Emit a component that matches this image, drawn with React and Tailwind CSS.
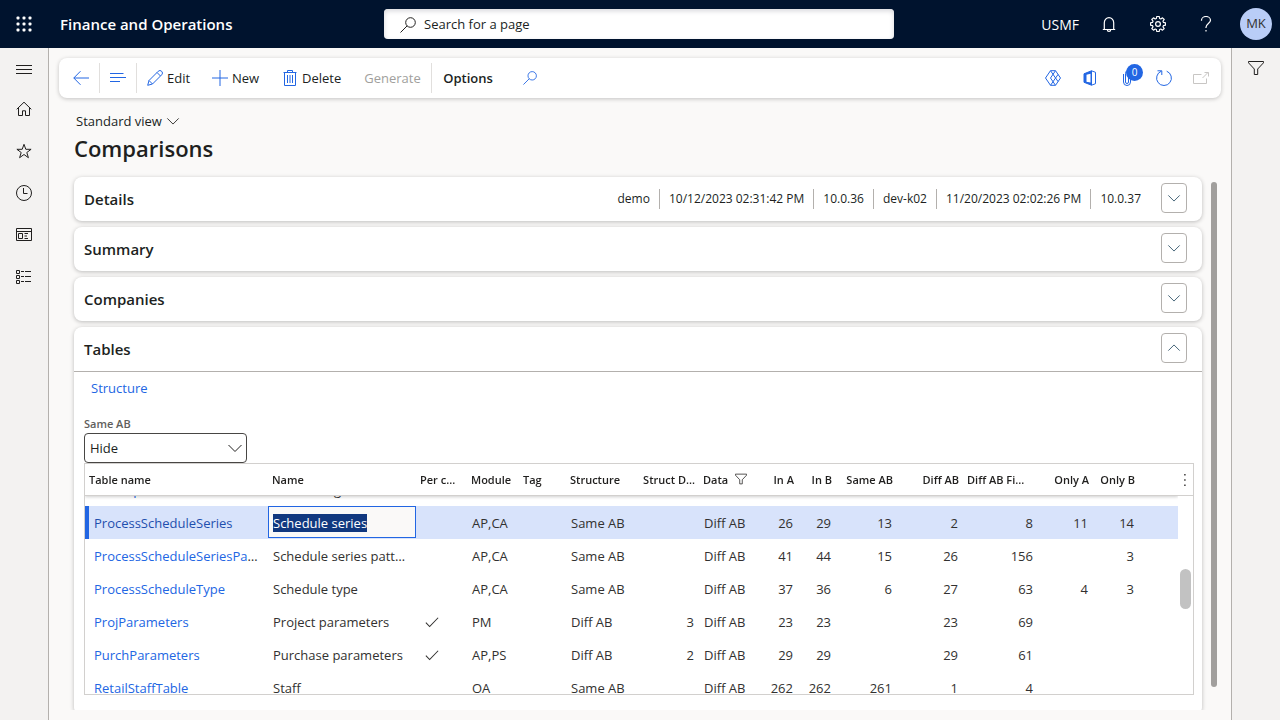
import React, { useLayoutEffect, useRef } from 'react'
import clsx from 'clsx'

const columns = [
  { key: "table", label: "Table name", width: "w-[183px]" },
  { key: "name", label: "Name", width: "w-[148px]" },
  { key: "perCompany", label: "Per c...", width: "w-[51px]" },
  { key: "module", label: "Module", width: "w-[52px]" },
  { key: "tag", label: "Tag", width: "w-[47px]" },
  { key: "structure", label: "Structure", width: "w-[70px]" },
  { key: "structDiff", label: "Struct D...", width: "w-[63px]", right: true },
  { key: "data", label: "Data", width: "w-[61px]", filtered: true },
  { key: "inA", label: "In A", width: "w-[38px]", right: true },
  { key: "inB", label: "In B", width: "w-[38px]", right: true },
  { key: "sameAB", label: "Same AB", width: "w-[61px]", right: true },
  { key: "diffAB", label: "Diff AB", width: "w-[66px]", right: true },
  { key: "diffFields", label: "Diff AB Fi...", width: "w-[75px]", right: true, leftLabel: true },
  { key: "onlyA", label: "Only A", width: "w-[55px]", right: true },
  { key: "onlyB", label: "Only B", width: "w-[46px]", right: true },
]

const rows = [
  { table: "PrintOptions", name: "Print listing" },
  { table: "ProcessScheduleSeries", name: "Schedule series", module: "AP,CA", structure: "Same AB", data: "Diff AB", inA: 26, inB: 29, sameAB: 13, diffAB: 2, diffFields: 8, onlyA: 11, onlyB: 14, selected: true },
  { table: "ProcessScheduleSeriesPattern", name: "Schedule series pattern", module: "AP,CA", structure: "Same AB", data: "Diff AB", inA: 41, inB: 44, sameAB: 15, diffAB: 26, diffFields: 156, onlyB: 3 },
  { table: "ProcessScheduleType", name: "Schedule type", module: "AP,CA", structure: "Same AB", data: "Diff AB", inA: 37, inB: 36, sameAB: 6, diffAB: 27, diffFields: 63, onlyA: 4, onlyB: 3 },
  { table: "ProjParameters", name: "Project parameters", perCompany: true, module: "PM", structure: "Diff AB", structDiff: 3, data: "Diff AB", inA: 23, inB: 23, diffAB: 23, diffFields: 69 },
  { table: "PurchParameters", name: "Purchase parameters", perCompany: true, module: "AP,PS", structure: "Diff AB", structDiff: 2, data: "Diff AB", inA: 29, inB: 29, diffAB: 29, diffFields: 61 },
  { table: "RetailStaffTable", name: "Staff", module: "OA", structure: "Same AB", data: "Diff AB", inA: 262, inB: 262, sameAB: 261, diffAB: 1, diffFields: 4 },
]

const details = ["demo", "10/12/2023 02:31:42 PM", "10.0.36", "dev-k02", "11/20/2023 02:02:26 PM", "10.0.37"]

function Icon({ children, className = "size-4" }) {
  return (
    <svg viewBox="0 0 16 16" fill="none" stroke="currentColor" strokeWidth="1" className={clsx("shrink-0", className)} aria-hidden="true">
      {children}
    </svg>
  )
}

const Waffle = () => (
  <Icon>
    {[0, 6, 12].map((y) => [0, 6, 12].map((x) => (
      <rect key={`${x}-${y}`} x={x + 0.5} y={y + 0.5} width="3" height="3" rx="1" fill="currentColor" stroke="none" />
    )))}
  </Icon>
)
const Menu = () => <Icon><path d="M0 5.5h16M0 9.5h16M0 13.5h16" /></Icon>
const Home = () => <Icon><path d="M.7 8.3 8 1.2l7.3 7.1M2.5 6.8v7.7h4V9.8h3v4.7h4V6.8" /></Icon>
const Star = () => <Icon><path d="m8 1.3 1.8 5h5.3l-4.3 3.2 1.6 5.2L8 11.5l-4.4 3.2 1.6-5.2L.9 6.3h5.3z" /></Icon>
const Clock = () => <Icon><circle cx="8" cy="8" r="7.5" /><path d="M7.5 3v5.5h4" /></Icon>
const Workspace = () => (
  <Icon><path d="M.5 1.5h15v12H.5zM.5 4.5h15M2.5 6.5h4v5h-4zM8.5 6.5H12M8.5 9H11M8.5 11.5H12" /></Icon>
)
const Modules = () => (
  <Icon><path d="M.5 1.5h3v3h-3zM.5 6.5h3v3h-3zM.5 11.5h3v3h-3zM5 2.5h3M9 2.5h6M5 7.5h3M9 7.5h6M5 12.5h3M9 12.5h6" /></Icon>
)
const Search = ({ className }) => (
  <Icon className={className}><circle cx="10.5" cy="5.5" r="4.8" /><path d="M7.1 8.9.5 15.5" /></Icon>
)
const Bell = () => (
  <Icon><path d="M1.8 13.500h12.400M3.300 13.500V6.700a4.700 5 0 0 1 9.400 0v6.800M6.300 13.700a1.700 1.700 0 0 0 3.400 0" strokeWidth="1.200" /></Icon>
)
const Gear = () => (
  <Icon>
    <circle cx="8" cy="8" r="2.4" strokeWidth="1.2" />
    <path strokeWidth="1.2" strokeLinejoin="round" d="M6.8.5h2.4l.4 2 1.2.5 1.700-1.200 1.700 1.700-1.200 1.700.5 1.200 2 .4v2.400l-2 .4-.5 1.200 1.200 1.700-1.700 1.700-1.700-1.200-1.200.5-.4 2H6.800l-.4-2-1.200-.5-1.700 1.200-1.700-1.700L3 10.800l-.5-1.200-2-.4V6.800l2-.4L3 5.200 1.800 3.500l1.700-1.700L5.200 3l1.200-.5z" />
  </Icon>
)
const Question = () => (
  <Icon><path d="M3.5 4.8V4.3a4.5 3.8 0 0 1 9 0c0 3-4.5 3.5-4.5 7V12M8 14v1.5" strokeWidth="1.2" /></Icon>
)
const Back = () => <Icon><path d="M16 8H.8M7.5 1.2.8 8l6.7 6.8" /></Icon>
const Lines = () => <Icon><path d="M0 3.5h13.5M0 7.5h16M0 11.5h10" /></Icon>
const Pencil = () => (
  <Icon><path d="M.7 15.3 2 10.5 11.2 1.3a2.2 2.2 0 0 1 3.5 3.5L5.5 14zM2 10.5 5.5 14M10 2.5 13.5 6" /></Icon>
)
const Plus = () => <Icon><path d="M8 0v16M0 8h16" /></Icon>
const Trash = () => (
  <Icon><path d="M1.5 2.5h13M5.5 2.5v-2h5v2M2.5 2.5v13h11v-13M5.5 5v8M8 5v8M10.5 5v8" /></Icon>
)
const Diamond = () => (
  <Icon>
    <path strokeLinejoin="round" d="M5.5.7h5L15.5 8l-5 7.3h-5L.5 8z" />
    <path d="M10.5.7 5.5 8l5 7.3M5.5.7 13 11.5M5.5 15.3 13 4.5" />
  </Icon>
)
const Office = () => (
  <Icon>
    <path d="M2 3.8 9.5.8v14.4L2 12.3z" fill="currentColor" />
    <path d="M4.5 4.8 8.5 3.7v9l-4-.7z" fill="white" stroke="none" />
    <path d="m9.5.8 4 1.5v11.4l-4 1.5M4 12.2l5.5 1.3" />
  </Icon>
)
const Clip = () => (
  <Icon><path d="M4.5 4v8a3.5 3.5 0 0 0 7 0V3.5a2.5 3 0 0 0-5 0V12a1.5 1.5 0 0 0 3 0V4" /></Icon>
)
const Refresh = () => <Icon><path d="M5.3 1.2a7.4 7.4 0 1 0 5.4 0M5.8 5V.8H1.5" /></Icon>
const PopOut = () => <Icon><path d="M8.5 4.5H.5v9h13V8.5M9.5 8 15 2.5M11.500 2.500h4V6.500" /></Icon>
const Funnel = ({ className }) => (
  <Icon className={className}><path d="M.5 1.5h15v1.3L9.7 9v5.5H6.3V9L.5 2.8z" /></Icon>
)
const Chevron = ({ className, up }) => (
  <Icon className={className}><path d={up ? "M1.5 11 8 4.5l6.5 6.5" : "M1.5 5 8 11.5 14.5 5"} /></Icon>
)
const Check = () => <Icon className="ml-1 size-3.5"><path d="M1 7.5 5.300 12 15 2" strokeWidth="1.200" /></Icon>

function TopBar() {
  return (
    <header className="flex h-12 shrink-0 items-center bg-[#00132e] text-white">
      <button aria-label="Apps" className="flex w-12 justify-center"><Waffle /></button>
      <span className="w-[336px] pl-3 text-[15px] leading-[22px] font-semibold">Finance and Operations</span>
      <label className="flex h-[30px] w-[510px] items-center gap-2 rounded bg-white pt-0.5 pr-4 pl-4 text-[#201f1e] shadow-[inset_0_2px_5px_#d8d8dc]">
        <Search />
        <input aria-label="Search for a page" placeholder="Search for a page" className="w-full bg-transparent text-[13px] outline-none placeholder:text-[#201f1e]" />
      </label>
      <div className="ml-auto flex items-center pr-2">
        <span className="mr-[22px] pt-0.5 text-sm">USMF</span>
        <button aria-label="Notifications" className="mr-[33px]"><Bell /></button>
        <button aria-label="Settings" className="mr-8"><Gear /></button>
        <button aria-label="Help" className="mr-[26px]"><Question /></button>
        <button className="size-8 rounded-full bg-[#b9cdf7] text-[13px] text-[#323130]">MK</button>
      </div>
    </header>
  )
}

function SideNav() {
  const items = [["Home", Home], ["Favorites", Star], ["Recent", Clock], ["Workspaces", Workspace], ["Modules", Modules]]
  return (
    <nav className="flex w-[49px] shrink-0 flex-col border-r border-[#b3b0ad] bg-[#f3f2f1] text-[#201f1e]">
      <button aria-label="Expand" className="flex h-10 items-center justify-center"><Menu /></button>
      {items.map(([label, Glyph]) => (
        <button key={label} aria-label={label} className="flex h-[42px] items-center justify-center"><Glyph /></button>
      ))}
    </nav>
  )
}

function ActionBar() {
  return (
    <div className="mx-[10px] mt-[10px] flex h-10 items-center rounded-lg bg-white pl-1 text-[13px] shadow-[0_1px_4px_#00000038]">
      <div className="flex items-center text-[#2266e3]">
        <button aria-label="Back" className="flex h-[30px] w-[37px] items-center justify-center border-r border-[#e1dfdd]"><Back /></button>
        <button aria-label="List" className="flex h-[30px] w-[37px] items-center justify-center border-r border-[#e1dfdd]"><Lines /></button>
      </div>
      <button className="flex w-[65px] items-center gap-1 pl-[10px]"><span className="text-[#2266e3]"><Pencil /></span><span className="pt-0.5">Edit</span></button>
      <button className="flex w-[70px] items-center gap-1 pl-[10px]"><span className="text-[#2266e3]"><Plus /></span><span className="pt-0.5">New</span></button>
      <button className="flex w-[82px] items-center gap-1 pl-[10px]"><span className="text-[#2266e3]"><Trash /></span><span className="pt-0.5">Delete</span></button>
      <button disabled className="h-[30px] w-[78px] border-r border-[#e1dfdd] pt-0.5 text-center text-[#a19f9d]">Generate</button>
      <button className="w-[72px] pt-0.5 text-center font-semibold">Options</button>
      <button aria-label="Find" className="pl-[19px] text-[#2266e3]"><Search className="size-3.5" /></button>
      <div className="ml-auto flex items-center gap-[21px] pr-3 text-[#2266e3]">
        <button aria-label="Power Apps"><Diamond /></button>
        <button aria-label="Open in Office"><Office /></button>
        <button aria-label="Attachments" className="relative">
          <Clip />
          <span className="absolute -top-[6px] left-[7px] flex h-[17px] w-[17px] items-center justify-center rounded-full bg-[#2266e3] text-[10px] text-white">0</span>
        </button>
        <button aria-label="Refresh"><Refresh /></button>
        <button aria-label="Pop out" className="text-[#c8c6c4]"><PopOut /></button>
      </div>
    </div>
  )
}

function Section({ title, open, summary, children }) {
  return (
    <section className="rounded-lg bg-white shadow-[0_1px_4px_#00000040]">
      <div className={clsx("flex items-center pr-[15px] pl-[10px]", open ? "h-[45px] border-b border-[#b3b0ad]" : "h-11")}>
        <h2 className="text-[15px] font-semibold">{title}</h2>
        <div className="ml-auto flex text-[12px] leading-[20px]">
          {summary?.map((text, i) => (
            <span key={text} className={clsx("px-[9px]", i > 0 && "border-l border-[#b3b0ad]")}>{text}</span>
          ))}
        </div>
        <button aria-label={`Toggle ${title}`} className="mb-[3px] ml-[11px] flex h-[30px] w-[26px] items-center justify-center rounded border border-[#b3b0ad] text-[#2d5066]">
          <Chevron className="size-3.5" up={open} />
        </button>
      </div>
      {children}
    </section>
  )
}

function Cell({ column, row, inputRef }) {
  const value = row[column.key]
  if (column.key === "table") return <a href="#" className={row.selected ? "text-[#1f4fae]" : "text-[#2266e3]"}>{value}</a>
  if (column.key === "perCompany") return value ? <Check /> : null
  if (column.key === "name" && row.selected) {
    return (
      <input
        ref={inputRef}
        aria-label="Name"
        defaultValue={value}
        className="block h-8 w-full border border-[#2266e3] bg-[#faf9f8] px-1 pt-0.5 outline-none selection:bg-[#11387f] selection:text-white"
      />
    )
  }
  return value
}

function cellClass(column, row) {
  if (column.right) return "pt-0.5 pr-[5px] text-right"
  if (column.key === "table") return row.selected ? "border-l-4 border-[#2266e3] pt-0.5 pr-2 pl-[5px]" : "pt-0.5 pr-2 pl-[9px]"
  if (column.key === "name" && row.selected) return "p-0 align-top"
  return "pt-0.5 pr-1 pl-[5px]"
}

function Grid() {
  const scroller = useRef(null)
  const input = useRef(null)

  useLayoutEffect(() => {
    input.current.focus({ preventScroll: true })
    input.current.select()
    scroller.current.scrollTop = 23
  }, [])

  return (
    <div className="flex h-[232px] border border-[#d2d0ce]">
      <div ref={scroller} className="min-w-0 flex-1 overflow-x-hidden overflow-y-auto [scrollbar-width:none]">
        <table className="w-full table-fixed border-separate border-spacing-0 text-[13px] text-[#323130]">
          <thead className="sticky top-0 z-10 bg-white text-[11px] text-[#201f1e] shadow-[0_1px_3px_#00000030]">
            <tr className="h-8">
              {columns.map((c) => (
                <th key={c.key} className={clsx("border-b border-[#d2d0ce] px-1 pt-0.5 font-semibold whitespace-nowrap", c.width, c.right && !c.leftLabel ? "text-right" : "text-left")}>
                  {c.filtered ? <span className="flex items-center gap-[7px]">{c.label}<Funnel className="mb-[3px] size-3" /></span> : c.label}
                </th>
              ))}
              <th className="border-b border-[#d2d0ce]" />
            </tr>
          </thead>
          <tbody>
            {rows.map((row) => (
              <tr key={row.table} className={clsx("h-[33px]", row.selected && "bg-[#d8e3fb]")}>
                {columns.map((c) => (
                  <td key={c.key} className={clsx("truncate", cellClass(c, row))}>
                    <Cell column={c} row={row} inputRef={input} />
                  </td>
                ))}
                <td />
              </tr>
            ))}
          </tbody>
        </table>
      </div>
      <div className="flex w-[15px] shrink-0 flex-col items-center">
        <button aria-label="Grid options" className="flex h-8 w-full items-center justify-center border-b border-[#d2d0ce]">
          <Icon className="size-3.5"><path d="M6 2h1.5M6 8h1.5M6 14h1.5" strokeWidth="1.5" /></Icon>
        </button>
        <div className="mt-[73px] h-10 w-[11px] rounded-full bg-[#c2c2c2]" />
      </div>
    </div>
  )
}

export default function App() {
  return (
    <div className="flex h-screen flex-col overflow-hidden bg-[#faf9f8] font-['Open_Sans',sans-serif] text-[#201f1e]">
      <TopBar />
      <div className="flex min-h-0 flex-1">
        <SideNav />
        <main className="flex min-w-0 flex-1 flex-col">
          <ActionBar />
          <div className="px-[25px] pt-3">
            <button className="flex h-[22px] items-center gap-1 pl-[2px] text-[13px]"><span className="pt-0.5">Standard view</span><Chevron className="size-3.5" /></button>
            <h1 className="text-[22px] leading-8 font-semibold">Comparisons</h1>
          </div>
          <div className="mb-[10px] flex min-h-0 flex-1">
            <div className="flex min-w-0 flex-1 flex-col gap-[6px] overflow-hidden pt-[13px] pr-[9px] pl-[25px]">
              <Section title="Details" summary={details} />
              <Section title="Summary" />
              <Section title="Companies" />
              <Section title="Tables" open>
                <div className="pr-[8px] pb-5 pl-[10px]">
                  <button className="flex h-8 items-center px-[7px] pt-0.5 text-[13px] text-[#2266e3]">Structure</button>
                  <label htmlFor="same-ab" className="mt-3 block h-[17px] text-[11px] leading-4 font-semibold text-[#605e5c]">Same AB</label>
                  <div className="relative w-[163px]">
                    <select id="same-ab" className="block h-[30px] w-full appearance-none rounded border border-[#484644] bg-white px-[5px] pt-0.5 text-[13px]">
                      <option>Hide</option>
                      <option>Show</option>
                    </select>
                    <Chevron className="pointer-events-none absolute top-[7px] right-1 size-4" />
                  </div>
                  <Grid />
                </div>
              </Section>
            </div>
            <div className="w-5 pt-[18px] pb-[23px]">
              <div className="h-full w-[6px] rounded-full bg-[#a19f9d]" />
            </div>
          </div>
        </main>
        <aside className="flex w-[49px] shrink-0 justify-center border-l border-[#b3b0ad] bg-[#f3f2f1] pt-3">
          <button aria-label="Filters" className="h-4"><Funnel /></button>
        </aside>
      </div>
    </div>
  )
}
